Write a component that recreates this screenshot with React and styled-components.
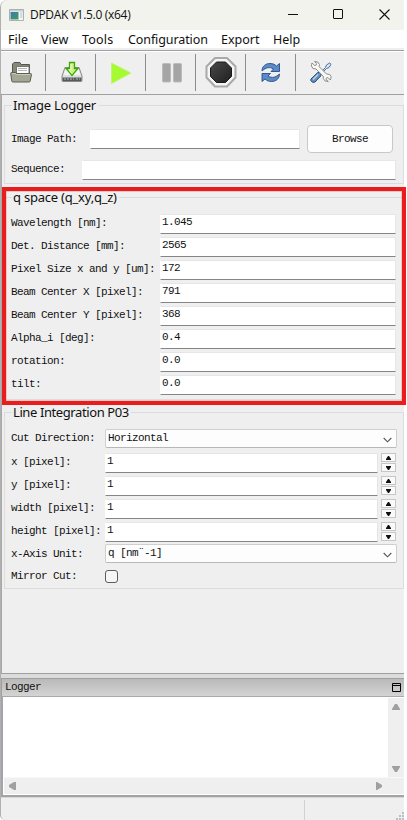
import React from "react";
import styled, { createGlobalStyle, css } from "styled-components";

const GlobalStyle = createGlobalStyle`
  * { box-sizing: border-box; }
  body { margin: 0; background: #fff; overflow: hidden; }
`;

const mono = css`
  font-family: "Liberation Mono", monospace;
  font-size: 11px;
  letter-spacing: -0.6px;
  line-height: 14px;
  color: #111;
  white-space: pre;
`;
const ui = css`
  font-family: "Noto Sans", sans-serif;
  color: #111;
  white-space: pre;
`;

const Window = styled.div`
  position: relative;
  width: 404px;
  height: 820px;
  display: flex;
  flex-direction: column;
  background: #efefef;
  border-left: 1px solid #b0b0b0;
  border-radius: 7px 0 0 5px;
`;
const TitleBar = styled.header`
  height: 30px;
  flex: none;
  display: flex;
  align-items: center;
  background: #f3f3ed;
  border-radius: 7px 0 0 0;
  padding-left: 8px;
`;
const Title = styled.span`
  ${ui}
  font-family: "Open Sans", sans-serif;
  font-size: 12px;
  letter-spacing: -0.3px;
  line-height: 18px;
  margin-left: 6px;
  flex: 1;
`;
const WindowButtons = styled.div`
  display: flex;
  gap: 35px;
  padding: 0 14px 1px 0;
  svg { display: block; }
`;
const MenuBar = styled.nav`
  height: 18px;
  flex: none;
  display: flex;
  background: #fff;
  padding-left: 7px;
`;
const MenuItem = styled.span`
  ${ui}
  font-size: 12.5px;
  line-height: 19px;
  width: ${(p) => p.$w}px;
  letter-spacing: ${(p) => p.$ls || 0}px;
`;
const Toolbar = styled.div`
  height: 47px;
  flex: none;
  display: flex;
  border-bottom: 1px solid #a0a0a0;
  padding-top: 6px;
  background: linear-gradient(#efefef 2px, #a0a0a0 2px, #a0a0a0 3px, #fff 3px, #fff 4px, #efefef 4px);
`;
const Tool = styled.div`
  width: ${(p) => p.$w || 50}px;
  height: 37px;
  flex: none;
  padding-left: ${(p) => p.$pl}px;
  border-right: ${(p) => (p.$last ? "none" : "1px solid #8c8c8c")};
  svg { display: block; }
`;
const Body = styled.main`
  height: 579px;
  flex: none;
  border-left: 1px solid #a8a8a8;
  border-bottom: 1px solid #a0a0a0;
  padding: 3px 0 0 2px;
`;
const Group = styled.section`
  width: 400px;
  height: ${(p) => p.$h}px;
  margin-bottom: ${(p) => p.$mb || 0}px;
  display: flex;
  flex-direction: column;
`;
const GroupHead = styled.div`
  height: 16px;
  flex: none;
  display: flex;
  align-items: center;
  &::before, &::after { content: ""; height: 9px; margin-top: 7px; }
  &::before { width: 7px; border-left: 1px solid #dcdcdc; border-top: 1px solid #dcdcdc; }
  &::after { flex: 1; border-right: 1px solid #dcdcdc; border-top: 1px solid #dcdcdc; }
`;
const GroupTitle = styled.h2`
  ${ui}
  font-size: 13px;
  font-weight: 400;
  line-height: 16px;
  margin: -2px 0 0;
  padding: 0 2px 0 1px;
  letter-spacing: ${(p) => p.$ls}px;
`;
const GroupBody = styled.div`
  flex: 1;
  border: 1px solid #dcdcdc;
  border-top: 0;
  padding: ${(p) => p.$pt}px 7px 0 6px;
`;
const Row = styled.div`
  display: flex;
  align-items: flex-start;
  height: ${(p) => p.$h || 23}px;
`;
const Label = styled.label`
  ${mono}
  width: ${(p) => p.$w}px;
  flex: none;
  padding-top: ${(p) => p.$pt ?? 2}px;
`;
const Field = styled.div`
  ${mono}
  width: ${(p) => p.$w}px;
  height: 20px;
  flex: none;
  background: #fff;
  border: 1px solid #e6e6e6;
  border-left-color: #fff;
  border-bottom: 1px solid #858585;
  border-radius: 1px;
  padding: 0 0 0 1px;
`;
const BrowseButton = styled.button`
  ${mono}
  width: 86px;
  height: 28px;
  margin: -4px 0 0 7px;
  background: #fdfdfd;
  border: 1px solid #c8c8c8;
  border-radius: 4px;
  padding: 0;
`;
const Select = styled.div`
  ${mono}
  width: 292px;
  height: 19px;
  flex: none;
  display: flex;
  justify-content: space-between;
  align-items: center;
  background: #fdfdfd;
  border: 1px solid #cfcfcf;
  border-bottom-color: #b8b8b8;
  border-radius: 2px;
  padding: 0 4px 1px 2px;
  svg { margin-top: 3px; }
`;
const Stepper = styled.div`
  display: flex;
  flex-direction: column;
  gap: 1px;
  margin-left: 3px;
`;
const Step = styled.div`
  width: 15px;
  height: 9px;
  border: 1px solid #c6c6c6;
  background: #fafafa;
  svg { display: block; margin: 2px 0 0 4px; }
`;
const Check = styled.div`
  width: 13px;
  height: 13px;
  margin-top: 3px;
  border: 1px solid #5d5d5d;
  border-radius: 3px;
  background: #f6f6f6;
`;
const Dock = styled.section`
  height: 123px;
  flex: none;
  border-top: 4px solid #dcdcdc;
  display: flex;
  flex-direction: column;
`;
const DockTitle = styled.div`
  ${mono}
  height: 19px;
  flex: none;
  display: flex;
  justify-content: space-between;
  align-items: center;
  padding: 0 3px 1px;
  border: 1px solid #a0a0a0;
  border-right: 0;
  border-bottom-color: #a8a8ae;
  background: linear-gradient(#b9b9b9, #d4d4d4);
`;
const LogArea = styled.div`
  flex: 1;
  display: grid;
  grid-template-columns: 1fr 16px;
  grid-template-rows: 1fr 17px;
  background: #fff;
  border-left: 2px solid #a4a4aa;
  border-bottom: 2px solid #a4a4a4;
  padding: 1px 0 1px 1px;
`;
const VerticalScroll = styled.div`
  grid-column: 2;
  background: #efefef;
  display: flex;
  flex-direction: column;
  justify-content: space-between;
  align-items: center;
  padding: 6px 0 5px;
`;
const HorizontalScroll = styled.div`
  grid-column: 1 / 3;
  background: #efefef;
  display: flex;
  justify-content: space-between;
  align-items: center;
  padding: 0 22px 0 5px;
  border-top: 1px solid #f8f8f8;
`;
const StatusBar = styled.footer`
  flex: 1;
  display: flex;
  justify-content: flex-end;
  border-top: 1px solid #d8d8d8;
  padding-top: 2px;
`;
const StatusCell = styled.div`
  width: 100px;
  border-left: 1px solid #d2d2d2;
  display: flex;
  justify-content: flex-end;
  align-items: flex-end;
  svg { display: block; }
`;
const Highlight = styled.div`
  position: absolute;
  left: 1px;
  top: 187px;
  width: 404px;
  height: 218px;
  border: 4px solid #e81e1e;
  box-shadow: inset 0 0 0 0.5px rgba(232, 30, 30, 0.4);
`;

const AppIcon = () => (
  <svg width="15" height="12" viewBox="0 0 15 12">
    <defs><linearGradient id="app" x2="1" y2="1"><stop stopColor="#3d79b0" /><stop offset="1" stopColor="#459a5b" /></linearGradient></defs>
    <path d="M.5.5h14v11H.5z" fill="#f5f7f7" stroke="#a9b1b6" />
    <path d="M1 1h13v1.500H1z" fill="#c4ced4" />
    <path d="M1.500 3h8v7.500h-8z" fill="url(#app)" />
    <path d="M11 4h2.500M11 6h2.500M11 8h2.500" stroke="#b6bec3" />
  </svg>
);
const FolderIcon = () => (
  <svg width="22" height="37" viewBox="0 0 22 37">
    <path d="M2.500 23.500v-13.500l1.500-1.500h6l1 2h8.500v12z" fill="#86887a" stroke="#55574c" />
    <path d="M6.500 21v-8.500h12.500V21z" fill="#fff" stroke="#74766c" />
    <path d="M8 14.500h9M8 16.500h9" stroke="#b5b5b5" />
    <path d="M.7 19.500q0-1 1-1h3.500l1.300 1h14q1 0 1 1l-1.300 6.500q-.2 1-1.200 1H3q-1 0-1.200-1z" fill="#a4a696" stroke="#5c5e50" />
    <path d="M2 19.500h3l1.500 1h13.500" fill="none" stroke="#c9cbbd" />
  </svg>
);
const SaveIcon = () => (
  <svg width="22" height="37" viewBox="0 0 22 37">
    <path d="M4 13.500h14l3 8.500v4.500q0 1-1 1H2q-1 0-1-1V22z" fill="#dedfdd" stroke="#868986" />
    <path d="M4.500 15h13l2 6h-17z" fill="#f3f3f2" />
    <path d="M1.500 23.500h19v3.500h-19z" fill="#555a5b" />
    <path d="M3 25h10M15 25h4" stroke="#b5babc" strokeDasharray="2 1" />
    <path d="M8.500 8.500h5v6h3.500l-6 7-6-7h3.500z" fill="#c9f47f" stroke="#3fa70c" strokeWidth="1.300" />
    <path d="M10 10v6h-2l3 3.500" fill="none" stroke="#efffd5" />
  </svg>
);
const PlayIcon = () => (
  <svg width="22" height="37" viewBox="0 0 22 37"><path d="M.5 9l19.500 10L.5 29.500z" fill="#a6fa32" stroke="#bdf46d" strokeWidth=".8" /></svg>
);
const PauseIcon = () => (
  <svg width="22" height="37" viewBox="0 0 22 37"><g fill="#a5a5a5" stroke="#bcbcbc"><rect x="1.500" y="9.500" width="8" height="18.500" rx="1" /><rect x="12.500" y="9.500" width="8" height="18.500" rx="1" /></g></svg>
);
const StopIcon = () => (
  <svg width="32" height="37" viewBox="0 0 32 37">
    <defs><linearGradient id="stop" x2="1" y2="1"><stop stopColor="#494949" /><stop offset="1" stopColor="#202020" /></linearGradient></defs>
    <path d="M10 4h12l8.500 8.500v11L22 32.500H10l-8.500-9v-11z" fill="#f5f5f5" stroke="#a9a9a9" strokeWidth="2" strokeLinejoin="round" />
    <path d="M11.500 8h9l6 6v8.500l-6 6h-9l-6-6V14z" fill="url(#stop)" stroke="#1b1b1b" strokeLinejoin="round" />
  </svg>
);
const RefreshIcon = () => (
  <svg width="20" height="37" viewBox="0 0 20 37" fill="#5b8ac4" stroke="#244e8d" strokeWidth=".9">
    <path d="M1 17c0-4.700 3.500-7.500 8-7.500 2.500 0 4.800.8 6.500 2.500l3-2.500v8h-8.500l2.500-2.500c-4-2.500-7.500-1.500-11.500 2z" />
    <path d="M18.500 20c0 4.700-3.500 7.500-8 7.500-2.500 0-4.800-.8-6.500-2.500l-3 2.500v-8h8.500L7 22c4 2.500 7.500 1.500 11.500-2z" />
  </svg>
);
const ToolsIcon = () => (
  <svg width="22" height="37" viewBox="0 0 22 37">
    <path d="M10.500 18.500l5-5 1-2.500 3.200-2 1.300 1.300-2 3.200-2.500 1-5 5" fill="#dfebf7" stroke="#3e6d9f" />
    <path d="M1 25l6.500-6.300q2-1 3.200.3 1 1.500 0 3L5 28q-2 1-3.500-.5-1.300-1.200-.5-2.500z" fill="#6992b9" stroke="#204c7a" />
    <path d="M3 25.500l5-5" stroke="#bdd5eb" strokeWidth="1.300" />
    <path d="M4.500 7.500q4-.5 5 3l-.3 2.200 7.300 7.300q4-.5 4.500 2.500.2 2-.7 3.500L17.800 23.500l-1.500.5-.3 1.500 2.300 2q-4 .5-5-3v-2.300L6 15q-4 .5-4.500-3-.2-1.500.5-3l2.700 2.500 1.600-.5.3-1.500z" fill="#f7f7f5" stroke="#8b8d88" />
  </svg>
);
const Chevron = () => (
  <svg width="9" height="6" viewBox="0 0 9 6"><path d="M.7 1l3.800 3.800L8.300 1" fill="none" stroke="#555" strokeWidth="1.100" /></svg>
);
const Arrow = ({ d, w = 8, h = 7 }) => (
  <svg width={w} height={h} viewBox={`0 0 ${w} ${h}`}><path d={d} fill="#a0a0a0" /></svg>
);

const SpinButtons = () => (
  <Stepper>
    <Step><svg width="5" height="4" viewBox="0 0 5 4"><path d="M0 4V3l2-3h1l2 3v1z" fill="#111" /></svg></Step>
    <Step><svg width="5" height="4" viewBox="0 0 5 4"><path d="M0 0v1l2 3h1l2-3V0z" fill="#111" /></svg></Step>
  </Stepper>
);

const parameters = [
  ["Wavelength [nm]:", "1.045"],
  ["Det. Distance [mm]:", "2565"],
  ["Pixel Size x and y [um]:", "172"],
  ["Beam Center X [pixel]:", "791"],
  ["Beam Center Y [pixel]:", "368"],
  ["Alpha_i [deg]:", "0.4"],
  ["rotation:", "0.0"],
  ["tilt:", "0.0"],
];
const spins = [
  ["x [pixel]:", 23],
  ["y [pixel]:", 23],
  ["width [pixel]:", 23],
  ["height [pixel]:", 22],
];

export default function App() {
  return (
    <>
      <GlobalStyle />
      <Window>
        <TitleBar>
          <AppIcon />
          <Title>DPDAK v1.5.0 (x64)</Title>
          <WindowButtons>
            <svg width="10" height="11" viewBox="0 0 10 11"><path d="M0 5.500h10" stroke="#111" /></svg>
            <svg width="10" height="11" viewBox="0 0 10 11"><rect x=".5" y=".5" width="9" height="9" rx=".5" fill="none" stroke="#111" /></svg>
            <svg width="12" height="11" viewBox="-1 0 12 11"><path d="M.5.500l10 10M10.500.500l-10 10" stroke="#111" strokeWidth="1.100" /></svg>
          </WindowButtons>
        </TitleBar>
        <MenuBar>
          <MenuItem $w={33}>File</MenuItem>
          <MenuItem $w={41}>View</MenuItem>
          <MenuItem $w={46} $ls={0.2}>Tools</MenuItem>
          <MenuItem $w={93} $ls={-0.1}>Configuration</MenuItem>
          <MenuItem $w={52}>Export</MenuItem>
          <MenuItem $w={40}>Help</MenuItem>
        </MenuBar>
        <Toolbar>
          <Tool $w={45} $pl={9}><FolderIcon /></Tool>
          <Tool $pl={15}><SaveIcon /></Tool>
          <Tool $pl={15}><PlayIcon /></Tool>
          <Tool $pl={15}><PauseIcon /></Tool>
          <Tool $pl={9}><StopIcon /></Tool>
          <Tool $pl={15}><RefreshIcon /></Tool>
          <Tool $pl={14} $last><ToolsIcon /></Tool>
        </Toolbar>
        <Body>
          <Group $h={86} $mb={6}>
            <GroupHead><GroupTitle $ls={-0.25}>Image Logger</GroupTitle></GroupHead>
            <GroupBody $pt={15}>
              <Row $h={31}>
                <Label $w={79} $pt={3}>Image Path:</Label>
                <Field $w={210} />
                <BrowseButton>Browse</BrowseButton>
              </Row>
              <Row>
                <Label $w={71} $pt={2}>Sequence:</Label>
                <Field $w={314} />
              </Row>
            </GroupBody>
          </Group>
          <Group $h={210} $mb={5}>
            <GroupHead><GroupTitle $ls={-0.22}>q space (q_xy,q_z)</GroupTitle></GroupHead>
            <GroupBody $pt={8}>
              {parameters.map(([label, value]) => (
                <Row key={label}>
                  <Label $w={149}>{label}</Label>
                  <Field $w={236}>{value}</Field>
                </Row>
              ))}
            </GroupBody>
          </Group>
          <Group $h={179}>
            <GroupHead><GroupTitle $ls={-0.4}>Line Integration P03</GroupTitle></GroupHead>
            <GroupBody $pt={8}>
              <Row $h={24}>
                <Label $w={94}>Cut Direction:</Label>
                <Select>Horizontal<Chevron /></Select>
              </Row>
              {spins.map(([label, height]) => (
                <Row key={label} $h={height}>
                  <Label $w={94}>{label}</Label>
                  <Field $w={273}>1</Field>
                  <SpinButtons />
                </Row>
              ))}
              <Row>
                <Label $w={94} $pt={3}>x-Axis Unit:</Label>
                <Select>q [nm¨-1]<Chevron /></Select>
              </Row>
              <Row $h={21}>
                <Label $w={94} $pt={2}>Mirror Cut:</Label>
                <Check />
              </Row>
            </GroupBody>
          </Group>
        </Body>
        <Dock>
          <DockTitle>
            Logger
            <svg width="9" height="9" viewBox="0 0 9 9"><path d="M.5.500h8v8h-8zM.5 2.500h8" fill="none" stroke="#000" /></svg>
          </DockTitle>
          <LogArea>
            <VerticalScroll>
              <Arrow d="M0 6V5l3-5h2l3 5v1z" h={6} />
              <Arrow d="M0 0v1l3 5h2l3-5V0z" h={6} />
            </VerticalScroll>
            <HorizontalScroll>
              <Arrow d="M7 0H5L0 3v2l5 3h2z" h={8} w={7} />
              <Arrow d="M0 0h1l5 3v2L1 8H0z" h={8} w={6} />
            </HorizontalScroll>
          </LogArea>
        </Dock>
        <StatusBar>
          <StatusCell>
            <svg width="8" height="8" viewBox="0 0 8 8" fill="#bdbdbd"><path d="M6 0h2v2H6zM3 3h2v2H3zM6 3h2v2H6zM0 6h2v2H0zM3 6h2v2H3zM6 6h2v2H6z" /></svg>
          </StatusCell>
        </StatusBar>
        <Highlight />
      </Window>
    </>
  );
}
